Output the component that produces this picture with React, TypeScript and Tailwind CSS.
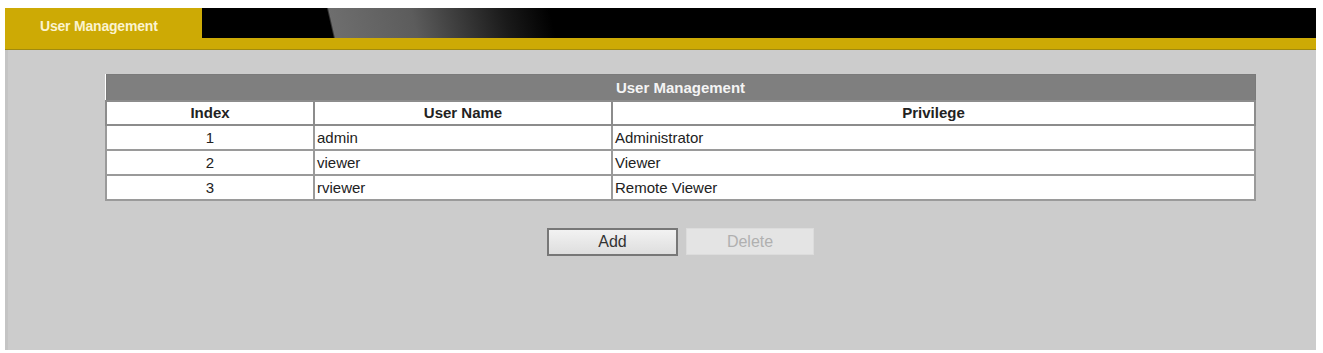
import React from 'react'

const users = [
  { index: 1, name: 'admin', privilege: 'Administrator' },
  { index: 2, name: 'viewer', privilege: 'Viewer' },
  { index: 3, name: 'rviewer', privilege: 'Remote Viewer' },
]

export default function App() {
  return (
    <div
      className="w-[1323px] h-[353px] bg-white pt-[8px] pl-[5px] pr-[7px] pb-[3px] flex flex-col"
      style={{ fontFamily: '"Liberation Sans", Arial, sans-serif' }}
    >
      {/* Top bar */}
      <div className="flex h-[42px] bg-[#cdaa05] border-b border-[#a08a10]">
        <div className="w-[197px] h-full pl-[35px] pt-[6px]">
          <span className="text-[14px] font-bold text-[#fbf3cf] tracking-[-0.2px]">User Management</span>
        </div>
        <div className="flex-1 h-[30px] bg-[linear-gradient(77deg,#000_0px,#000_128px,#6e6e6e_130px,#5c5c5c_210px,#1a1a1a_300px,#000_345px,#000_100%)]" />
      </div>

      {/* Content */}
      <div className="flex-1 bg-[#cccccc] border-l-[3px] border-[#c4c4c4] flex flex-col items-start pt-[24px] pl-[98px]">
        <div className="flex flex-col items-center w-[1149px]">
          <table className="w-[1149px] border-collapse bg-white text-[15px] text-[#222] table-fixed border border-[#7a7a7a]">
            <colgroup>
              <col className="w-[208px]" />
              <col className="w-[298px]" />
              <col className="w-[643px]" />
            </colgroup>
            <thead>
              <tr className="h-[26px] bg-[#7f7f7f]">
                <th colSpan={3} className="text-center font-bold text-[#f4f4f4] text-[15px] leading-none">
                  User Management
                </th>
              </tr>
              <tr className="h-[24px]">
                <th className="border-2 border-[#8c8c8c] font-bold text-center">Index</th>
                <th className="border-2 border-[#8c8c8c] font-bold text-center">User Name</th>
                <th className="border-2 border-[#8c8c8c] font-bold text-center">Privilege</th>
              </tr>
            </thead>
            <tbody>
              {users.map((u) => (
                <tr key={u.index} className="h-[25px]">
                  <td className="border-2 border-[#9a9a9a] text-center leading-none">{u.index}</td>
                  <td className="border-2 border-[#9a9a9a] pl-[2px] leading-none">{u.name}</td>
                  <td className="border-2 border-[#9a9a9a] pl-[2px] leading-none">{u.privilege}</td>
                </tr>
              ))}
            </tbody>
          </table>

          <div className="flex gap-[8px] mt-[27px]">
            <button className="w-[131px] h-[28px] border-2 border-[#777] bg-[linear-gradient(#f2f2f2,#dedede)] text-[16px] text-[#333] leading-none">
              Add
            </button>
            <button
              disabled
              className="w-[128px] h-[27px] bg-[#e4e4e4] border border-[#dcdcdc] text-[16px] text-[#b0b0b0] leading-none"
            >
              Delete
            </button>
          </div>
        </div>
      </div>
    </div>
  )
}
